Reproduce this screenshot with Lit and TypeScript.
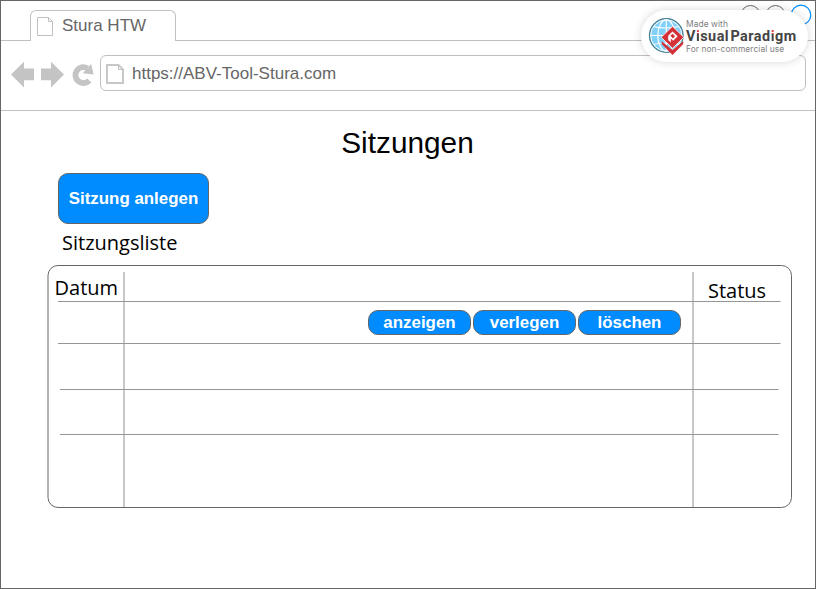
import { LitElement, html, css, svg } from "lit";
import { customElement, property } from "lit/decorators.js";

@customElement("page-icon")
class PageIcon extends LitElement {
  @property({ type: Boolean, reflect: true }) bold = false;
  static styles = css`
    :host { display: block; width: 18px; height: 21px; flex: none; }
    svg { display: block; width: 18px; height: 21px; overflow: visible; }
  `;
  render() {
    return this.bold
      ? html`<svg viewBox="0 0 18 21" fill="none" stroke="#c8c8c8">
          <path d="M1 2H12.5L17 6.5V20H1Z" stroke-width="2" /><path d="M12.5 2V6.5H17" stroke="#c0c0c0" />
        </svg>`
      : html`<svg viewBox="0 0 18 21" fill="none" stroke="#c0c0c0">
          <path d="M1.5 1.5H12.5L16.5 5.5V19.5H1.5Z" /><path d="M12.5 1.5V5.5H16.5" />
        </svg>`;
  }
}

@customElement("pill-button")
class PillButton extends LitElement {
  static styles = css`
    :host { display: block; }
    button {
      display: block; box-sizing: border-box; width: 103px; height: 25px; margin: 0; padding: 0;
      border: 1px solid #666; border-radius: 10px; background: #008cff; color: #fff;
      font: bold 16.9px/22px "Liberation Sans", Arial, sans-serif; text-align: center; white-space: nowrap;
    }
    :host([large]) button { width: 151px; height: 51px; line-height: 49px; }
  `;
  render() {
    return html`<button><slot></slot></button>`;
  }
}

@customElement("vendor-badge")
class VendorBadge extends LitElement {
  static styles = css`
    :host {
      display: flex; box-sizing: border-box; width: 167px; height: 52px; padding: 7px 0 0 7px;
      border-radius: 26px; background: #fff; box-shadow: 0 0 8px rgba(0, 0, 0, 0.16);
      font-family: Inter, sans-serif;
    }
    svg { display: block; width: 38px; height: 39px; flex: none; }
    .text { display: flex; flex-direction: column; padding-top: 1px; white-space: nowrap; color: #808080; }
    .small { font-size: 8.4px; line-height: 12px; height: 12px; letter-spacing: 0.08px; }
    .name { font: bold 14.4px/14px Roboto, sans-serif; color: #444; height: 13px; letter-spacing: 0.5px; }
    .name span { margin-left: 1.2px; }
    .name i {
      font-style: normal; color: transparent; background: linear-gradient(#d8353b 36%, #444 36%);
      -webkit-background-clip: text; background-clip: text;
    }
  `;
  render() {
    return html`
      <svg viewBox="0 0 38 39">
        <circle cx="18.3" cy="18.5" r="16.8" fill="#80d0fa" stroke="#4b7f91" stroke-width="1.3" />
        <circle cx="18.3" cy="18.5" r="15.6" fill="none" stroke="#fff" stroke-width="1" />
        <g fill="none" stroke="#fff" stroke-width="1.2">
          <ellipse cx="18.3" cy="18.5" rx="8.5" ry="15.6" />
          <path d="M18.3 3V34M2.5 18.5H34M5.5 9.5Q18 12.5 31 9.5M5.5 27.5Q18 24.5 31 27.5" />
        </g>
        <path d="M24.5 9.3L35.8 20.3L24.5 31.3L13.2 20.3Z" fill="#d33238" stroke="#fff" stroke-width="0.8" />
        <path d="M13.7 24.2L24.5 33L35.3 24.2V27L24.5 38L13.7 27Z" fill="#d33238" />
        <path d="M24.5 14.4L29.6 19.3L25.2 23.7L22.8 21.6V25.4L20.2 23V18.7Z" fill="#fff" />
        <path d="M24.5 16.7L27.1 19.3L25 21.4L22.4 18.8Z" fill="#d33238" />
      </svg>
      <div class="text">
        <div class="small">Made with</div>
        <div class="name">V<i>i</i>sual<span>Parad</span><i>i</i>gm</div>
        <div class="small">For non-commercial use</div>
      </div>`;
  }
}

const ROWS = [
  { height: 30, inset: 11, width: 722.5 },
  { height: 42, inset: 11, width: 722.5 },
  { height: 46, inset: 13, width: 718.5 },
  { height: 45, inset: 13, width: 718.5 },
];

@customElement("session-table")
class SessionTable extends LitElement {
  static styles = css`
    :host { display: block; position: relative; width: 745px; height: 243px; color: #000; }
    .frame { position: absolute; left: 0; top: 0; width: 745px; height: 243px; }
    .grid {
      position: relative; display: grid; height: 243px; grid-template-columns: 77px 569px 1fr;
      grid-template-rows: 37px 42px 46px 45px 1fr;
      font: 20px/27px "Open Sans", sans-serif;
    }
    .head { padding: 9px 0 0 7.5px; white-space: nowrap; }
    .status { grid-column: 3; padding: 12px 0 0 15px; }
    .actions { grid-column: 2; grid-row: 2; display: flex; justify-content: flex-end; gap: 2px; padding: 8px 12px 0 0; }
  `;
  render() {
    let y = 6.5;
    return html`
      <svg class="frame" viewBox="0 0 745 243" fill="none">
        <g stroke="#c8c8c8" stroke-width="2"><path d="M77 7V242M646 7V242" /></g>
        <g stroke="#969696">
          ${ROWS.map((r) => { y += r.height; return svg`<path d=${`M${r.inset} ${y}h${r.width}`} />`; })}
        </g>
        <rect x="1" y="0.5" width="743.5" height="242" rx="10" stroke="#666" />
      </svg>
      <div class="grid">
        <div class="head">Datum</div>
        <div class="head status">Status</div>
        <div class="actions">
          <pill-button>anzeigen</pill-button><pill-button>verlegen</pill-button><pill-button>löschen</pill-button>
        </div>
      </div>`;
  }
}

@customElement("app-root")
class AppRoot extends LitElement {
  static styles = css`
    :host {
      display: block; position: relative; box-sizing: border-box; width: 816px; height: 589px; overflow: hidden;
      border: 1px solid #666; background: #fff; font-family: "Liberation Sans", Arial, sans-serif;
    }
    .tabs { display: flex; align-items: flex-end; height: 39px; border-bottom: 1px solid #c0c0c0; padding-left: 29px; }
    .tab {
      display: flex; box-sizing: border-box; width: 146px; height: 31px; margin-bottom: -1px; padding: 5px 0 0 5px; gap: 8px;
      border: 1px solid #c0c0c0; border-bottom: 0; border-radius: 6px 6px 0 0; background: #fff;
      color: #666; font-size: 17px; line-height: 20px; white-space: nowrap;
    }
    .bar { display: flex; box-sizing: border-box; height: 70px; border-bottom: 1px solid #c0c0c0; padding: 14px 9px 0 10px; }
    .nav { display: block; width: 89px; height: 36px; flex: none; }
    .address {
      display: flex; box-sizing: border-box; flex: 1; height: 36px; padding: 7px 0 0 5px; gap: 8px;
      border: 1px solid #c0c0c0; border-radius: 6px; color: #666; font-size: 17px; line-height: 22px;
    }
    .window { position: absolute; right: 3px; top: 3px; width: 72px; height: 22px; }
    .badge { position: absolute; left: 640px; top: 9px; }
    h1 { margin: 0; padding: 13px 1px 0 0; font-weight: 400; font-size: 29.8px; line-height: 38px; text-align: center; color: #000; }
    .new { margin: 11px 0 0 57px; }
    h2 { margin: 5px 0 0 61px; font: 20px/27px "Open Sans", sans-serif; color: #000; }
    session-table { margin: 9px 0 0 46px; }
  `;
  render() {
    return html`
      <div class="tabs"><div class="tab"><page-icon></page-icon><span>Stura HTW</span></div></div>
      <div class="bar">
        <svg class="nav" viewBox="0 0 89 36">
          <g fill="#c4c4c4">
            <path d="M0 19.6L13 6.7V13.5H23V25.3H13V32.5Z" /><path d="M53 19.6L40 6.7V13.5H30V25.3H40V32.5Z" />
          </g>
          <path d="M78.3 25.5A8 8 0 1 1 76.5 13.2" fill="none" stroke="#c4c4c4" stroke-width="5.8" />
          <path d="M80.2 9L82.6 19.5L71.8 18.2Z" fill="#c4c4c4" />
        </svg>
        <div class="address"><page-icon bold></page-icon><span>https://ABV-Tool-Stura.com</span></div>
      </div>
      <svg class="window" viewBox="0 0 72 22" fill="none">
        <circle cx="10.5" cy="11" r="9.5" stroke="#666" /><circle cx="35.5" cy="11" r="9.5" stroke="#666" />
        <circle cx="61" cy="11" r="9.8" stroke="#008cff" stroke-width="1.2" />
      </svg>
      <vendor-badge class="badge"></vendor-badge>
      <h1>Sitzungen</h1>
      <pill-button class="new" large>Sitzung anlegen</pill-button>
      <h2>Sitzungsliste</h2>
      <session-table></session-table>`;
  }
}
